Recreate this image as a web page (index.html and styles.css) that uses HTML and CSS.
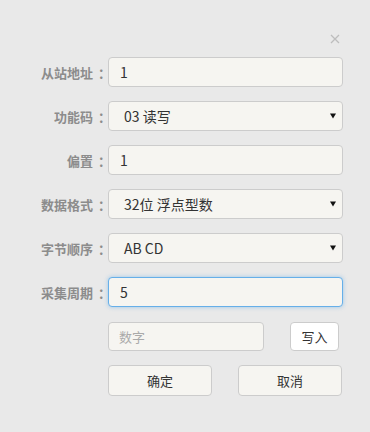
FILE: index.html
```html
<!DOCTYPE html>
<html lang="zh">
<head>
<meta charset="utf-8">
<link rel="stylesheet" href="styles.css">
</head>
<body>
<div class="dialog">
  <div class="header">
    <svg class="close" width="10" height="10" viewBox="0 0 10 10"><path d="M1 1 L9 9 M9 1 L1 9" stroke="#bdbdbd" stroke-width="1.3" fill="none"/></svg>
  </div>
  <div class="form">
    <div class="row">
      <label class="label">从站地址<span class="colon">：</span></label>
      <input class="field" type="text" value="1">
    </div>
    <div class="row">
      <label class="label">功能码<span class="colon">：</span></label>
      <div class="field select"><span>03 读写</span><svg class="arrow" width="6" height="6" viewBox="0 0 6 6"><path d="M0 0.5 H6 L3 5.5 Z" fill="#111"/></svg></div>
    </div>
    <div class="row">
      <label class="label">偏置<span class="colon">：</span></label>
      <input class="field" type="text" value="1">
    </div>
    <div class="row">
      <label class="label">数据格式<span class="colon">：</span></label>
      <div class="field select"><span>32位 浮点型数</span><svg class="arrow" width="6" height="6" viewBox="0 0 6 6"><path d="M0 0.5 H6 L3 5.5 Z" fill="#111"/></svg></div>
    </div>
    <div class="row">
      <label class="label">字节顺序<span class="colon">：</span></label>
      <div class="field select"><span>AB CD</span><svg class="arrow" width="6" height="6" viewBox="0 0 6 6"><path d="M0 0.5 H6 L3 5.5 Z" fill="#111"/></svg></div>
    </div>
    <div class="row">
      <label class="label">采集周期<span class="colon">：</span></label>
      <input class="field focus" type="text" value="5">
    </div>
  </div>
  <div class="write-row">
    <input class="number" type="text" placeholder="数字">
    <button class="write">写入</button>
  </div>
  <div class="action-row">
    <button class="btn">确定</button>
    <button class="btn">取消</button>
  </div>
</div>
</body>
</html>
```

FILE: styles.css
```css
html, body {
  margin: 0;
  padding: 0;
  background: #e9e9e9;
}
body {
  width: 370px;
  height: 432px;
  font-family: "Noto Sans CJK SC", "Noto Sans", sans-serif;
}
.dialog {
  display: flex;
  flex-direction: column;
}
.header {
  display: flex;
  justify-content: flex-end;
  padding: 34px 30px 0 0;
  height: 9px;
}
.close {
  display: block;
  margin-top: -0.5px;
}
.form {
  display: flex;
  flex-direction: column;
  gap: 14px;
  margin-top: 14px;
}
.row {
  display: flex;
  align-items: center;
}
.label {
  width: 106px;
  text-align: right;
  font-family: "Noto Sans CJK SC", sans-serif;
  font-size: 13px;
  font-weight: bold;
  color: #8c8c8c;
  margin-right: 2px;
  white-space: nowrap;
}
.colon {
  display: inline-block;
  box-sizing: border-box;
  width: 13px;
  padding-left: 5px;
  overflow: visible;
  text-align: left;
}
.field {
  box-sizing: border-box;
  width: 235px;
  height: 30px;
  border: 1px solid #cccccc;
  border-radius: 4px;
  background: #f6f5f1;
  font-family: "Noto Sans CJK SC", "Noto Sans", sans-serif;
  font-size: 14px;
  color: #333;
  padding: 0 11px;
  outline: none;
  margin: 0;
}
.select {
  display: flex;
  align-items: center;
  justify-content: space-between;
  padding: 0 6px 0 15px;
}
.arrow {
  display: block;
}
.focus {
  border-color: #66afe9;
  box-shadow: 0 0 4px rgba(102, 175, 233, 0.6);
}
.write-row {
  display: flex;
  align-items: center;
  gap: 26px;
  padding-left: 108px;
  margin-top: 15px;
}
.number {
  box-sizing: border-box;
  width: 156px;
  height: 29px;
  border: 1px solid #cccccc;
  border-radius: 4px;
  background: #f6f5f1;
  font-family: "Noto Sans CJK SC", "Noto Sans", sans-serif;
  font-size: 13px;
  color: #333;
  padding: 0 10px;
  margin: 0;
  outline: none;
}
.number::placeholder {
  color: #aaaaaa;
}
.write {
  box-sizing: border-box;
  width: 49px;
  height: 29px;
  border: 1px solid #cccccc;
  border-radius: 4px;
  background: #ffffff;
  font-family: "Noto Sans CJK SC", "Noto Sans", sans-serif;
  font-size: 13px;
  color: #333;
  padding: 0;
  margin: 0;
}
.action-row {
  display: flex;
  gap: 26px;
  padding-left: 108px;
  margin-top: 14px;
}
.btn {
  box-sizing: border-box;
  width: 104px;
  height: 31px;
  border: 1px solid #cccccc;
  border-radius: 4px;
  background: #f6f5f1;
  font-family: "Noto Sans CJK SC", "Noto Sans", sans-serif;
  font-size: 13px;
  color: #333;
  padding: 0;
  margin: 0;
}
```
